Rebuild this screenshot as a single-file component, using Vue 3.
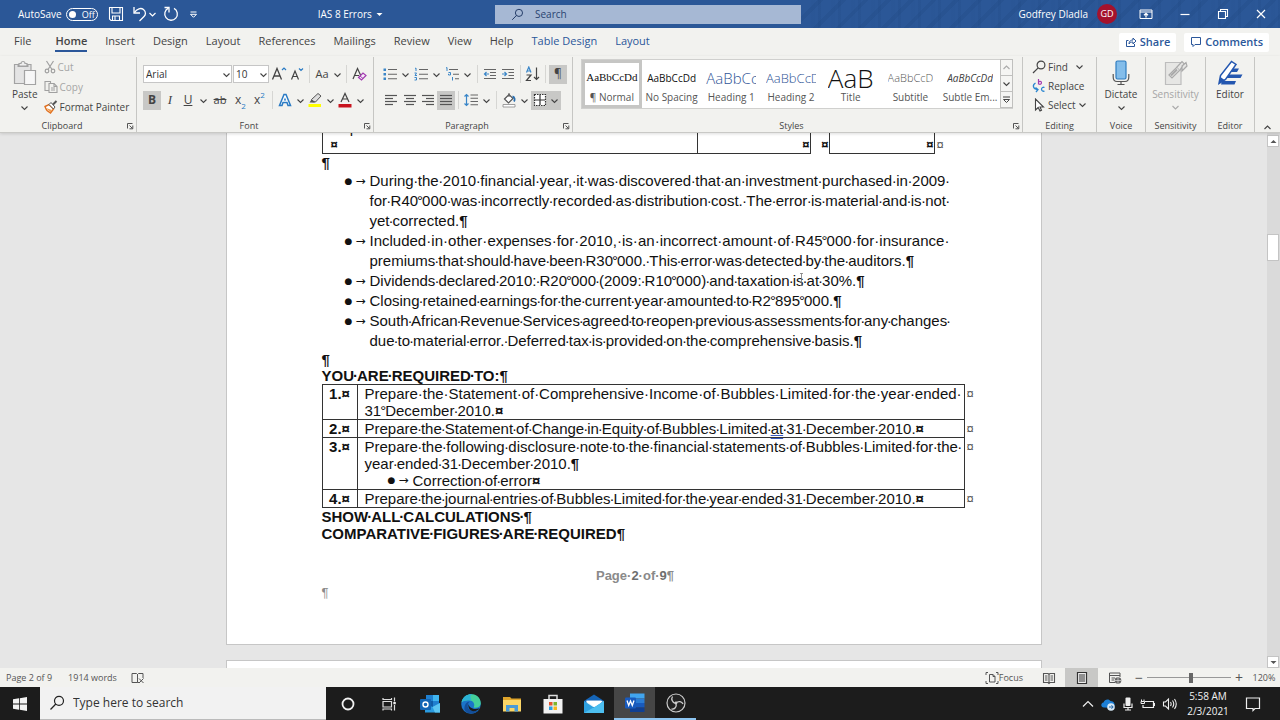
<script setup>
import { h, ref } from 'vue'

const chev = '<path d="M1.5 3.5 4.5 6.5 7.5 3.5" fill="none" stroke="#444" stroke-width="1.1"/>'
const lines4 = (a) => a.map(([x1, x2], i) => `<path d="M${x1} ${2.5 + i * 3}H${x2}" stroke="#555" stroke-width="1.2"/>`).join('')

const icons = {
  chev: [9, 9, chev],
  save: [16, 16, '<g fill="none" stroke="#fff" stroke-width="1.1"><path d="M1.5 1.5H14.5V14.5H3L1.5 13Z"/><path d="M4 1.5V7H12V1.5M4.5 14.5V10H11.5V14.5M7 10.5V14"/></g>'],
  undo: [16, 16, '<g fill="none" stroke="#fff" stroke-width="1.3"><path d="M2 1V7H8"/><path d="M2.3 6.7C5 2.5 9 1.5 11.5 3.5 14.5 6 13.5 9 12 10.5L7.5 15"/></g>'],
  chevW: [9, 9, '<path d="M1.5 3 4.5 6 7.5 3" fill="none" stroke="#fff" stroke-width="1.2"/>'],
  redo: [16, 16, '<g fill="none" stroke="#fff" stroke-width="1.3"><path d="M5.5 2.2A6.3 6.3 0 1 0 11 2.4"/><path d="M1.5 1.5H6V6.5"/></g>'],
  custom: [9, 9, '<path d="M1.5 2H7.5" stroke="#fff"/><path d="M1.5 4.3 4.5 7.3 7.5 4.3Z" fill="none" stroke="#fff"/>'],
  caretW: [9, 9, '<path d="M1.5 3H7.5L4.5 6Z" fill="#fff"/>'],
  search: [16, 16, '<g fill="none" stroke="#1f3864" stroke-width="1.2"><circle cx="9.8" cy="6" r="4.4"/><path d="M6.7 9.2 1.5 14.5"/></g>'],
  mode: [14, 14, '<g fill="none" stroke="#fff"><path d="M1 3H13V11.5H1ZM1 5H13"/><path d="M7 10.5V6.5M5 8.3 7 6.3 9 8.3" stroke-width="1.3"/></g>'],
  min: [12, 12, '<path d="M1.5 6.5H10.5" stroke="#fff" stroke-width="1.2"/>'],
  restore: [12, 12, '<g fill="none" stroke="#fff" stroke-width="1.1"><path d="M1.5 3.5H8.5V10.5H1.5Z"/><path d="M3.5 3.5V1.5H10.5V8.5H8.5"/></g>'],
  close: [12, 12, '<path d="M2 2 10 10M10 2 2 10" stroke="#fff" stroke-width="1.2"/>'],
  share: [12, 12, '<g fill="none" stroke="#2b579a"><path d="M3.5 4.5H1.5V10.5H9.5V8"/><path d="M4 8C4 5 6 4 8 4V2L11 5 8 8V6C6 6 5 6.5 4 8Z"/></g>'],
  comment: [12, 12, '<path d="M1.5 1.5H10.5V8.5H5L3 10.5V8.5H1.5Z" fill="none" stroke="#2b579a"/>'],
  paste: [24, 26, '<g fill="#efefef" stroke="#a3a3a3" stroke-width="1.2"><path d="M1.5 4.5H18V23.5H1.5Z" fill="#e4e4e4"/><path d="M4.5 6H15.5" stroke-width="2"/><path d="M6 6V3.5H8A2 2 0 0 1 12 3.5H14V6Z"/><path d="M11.5 10.5H22.5V24.5H11.5Z" fill="#f7f7f7"/></g>'],
  cut: [12, 14, '<g fill="none" stroke="#a0a0a0" stroke-width="1.2"><path d="M2.5 1 8 9.5M9.5 1 4 9.5"/><circle cx="3" cy="11" r="1.8"/><circle cx="9" cy="11" r="1.8"/></g>'],
  copy: [14, 14, '<g fill="#f1f1ee" stroke="#a0a0a0" stroke-width="1.1"><path d="M1 1.5H6.5V10.5H1Z"/><path d="M5 3.5H10L13 6.5V12.5H5Z"/><path d="M10 3.5V6.5H13M7 8H11M7 10H11" fill="none"/></g>'],
  painter: [14, 14, '<path d="M1 6.5 5 4.5 9.5 9 6.5 13 3 10.5 2 9Z" fill="#fff" stroke="#e07020" stroke-width="1.4"/><path d="M2 8 6.5 12.5 8 10Z" fill="#f19d4f"/><path d="M5 4.5 7 2.5 11 7 9.5 9Z" fill="#fff" stroke="#555"/><path d="M9 4.5 12.5 1" stroke="#555" stroke-width="2"/>'],
  launch: [8, 8, '<path d="M1.5 6.5V1.5H6.5M3.5 3.5 6.5 6.5M6.8 3.5V6.8H3.5" fill="none" stroke="#555"/>'],
  eraser: [16, 16, '<path d="M2 13 6.5 2.5 9.5 9M3.7 9.5H8" fill="none" stroke="#444" stroke-width="1.2"/><path d="M7.5 11.5 12 7 15 9.5 10.5 14Z" fill="#f6ecf8" stroke="#a33bb0" stroke-width="1.2"/><path d="M9 10 12 12.5" stroke="#a33bb0"/>'],
  growA: [18, 18, '<path d="M2.5 14.500 7 3.500 11.500 14.500M4 11H10" fill="none" stroke="#444" stroke-width="1.3"/><path d="M12 5 14 3 16 5" fill="none" stroke="#2a7bc4" stroke-width="1.2"/>'],
  shrinkA: [18, 18, '<path d="M3.500 14.500 7 6 10.500 14.500M4.800 11.500H9.200" fill="none" stroke="#444" stroke-width="1.2"/><path d="M11 3.500 13 5.500 15 3.500" fill="none" stroke="#2a7bc4" stroke-width="1.2"/>'],
  fx: [14, 14, '<path d="M1.5 12.5 6 1.5H8L12.5 12.5H10L9 9.5H5L4 12.5Z" fill="#fff" stroke="#2a7bc4" stroke-width="1.5"/><path d="M5.8 7.5H8.2L7 4.5Z" fill="#2a7bc4"/>'],
  hl: [16, 16, '<path d="M4.5 7.5 11 1.5 14 4 8.5 10H5.5Z" fill="#ddd" stroke="#555"/><path d="M4.5 7.5 8.5 10 5 10.5 2.5 10.5Z" fill="#555"/><path d="M1.5 12H14V15H1.5Z" fill="#ff0"/>'],
  fc: [14, 16, '<path d="M3 10 7 1.5 11 10M4.4 7H9.6" fill="none" stroke="#444" stroke-width="1.2"/><path d="M.5 12H13.5V15.5H.5Z" fill="#c8141e"/>'],
  bul: [14, 14, '<path d="M.5 1.5h2.5v2.5H.5zM.5 6h2.5v2.5H.5zM.5 10.5h2.5v2.5H.5z" fill="#3a86c8"/><path d="M5 2.5H14M5 7.2H14M5 11.8H14" stroke="#666" stroke-width="1.1"/>'],
  num: [14, 14, '<path d="M1 1.5 2 1V4M.5 6H2.5L1 8.5H3M.5 10.5H2.5V13H.5" fill="none" stroke="#3a86c8"/><path d="M5 2.5H14M5 7.2H14M5 11.8H14" stroke="#666" stroke-width="1.1"/>'],
  multi: [14, 14, '<path d="M1 1 2 .5V4M3.5 5.5H5.5V8H3.5V6.8M7.5 10V13.5" fill="none" stroke="#3a86c8"/><path d="M4 2.5H13M8 7.2H14M10 11.8H14" stroke="#666" stroke-width="1.1"/>'],
  out: [14, 14, '<path d="M1 2.5H13M7 5.5H13M7 8.5H13M1 11.5H13" stroke="#666" stroke-width="1.1"/><path d="M6 7H1.5M3.5 5 1.5 7 3.5 9" fill="none" stroke="#3a86c8" stroke-width="1.2"/>'],
  ind: [14, 14, '<path d="M1 2.5H13M7.5 5.5H13M7.5 8.5H13M1 11.5H13" stroke="#666" stroke-width="1.1"/><path d="M1 7H5.5M3.5 5 5.5 7 3.5 9" fill="none" stroke="#3a86c8" stroke-width="1.2"/>'],
  sort: [16, 16, '<path d="M1.5 6.5 3.8 1 6 6.5M2.2 5H5.3" fill="none" stroke="#3a86c8" stroke-width="1.2"/><path d="M1.5 9H6L1.5 14.5H6" fill="none" stroke="#444" stroke-width="1.2"/><path d="M11.5 1.5V13.5M9 11 11.5 13.5 14 11" fill="none" stroke="#444" stroke-width="1.2"/>'],
  al: [14, 14, lines4([[1, 13], [1, 9], [1, 13], [1, 9]])],
  ac: [14, 14, lines4([[1, 13], [3, 11], [1, 13], [3, 11]])],
  ar: [14, 14, lines4([[1, 13], [5, 13], [1, 13], [5, 13]])],
  aj: [14, 14, lines4([[1, 13], [1, 13], [1, 13], [1, 13]])],
  ls: [14, 14, '<path d="M6.5 2H14M6.5 5.2H14M6.5 8.5H14M6.5 11.8H14" stroke="#666" stroke-width="1.1"/><path d="M2.5 1.5V12.5M.5 3.5 2.5 1.5 4.5 3.5M.5 10.5 2.5 12.5 4.5 10.5" fill="none" stroke="#3a86c8" stroke-width="1.2"/>'],
  bucket: [14, 16, '<path d="M2.5 7 7 2.5 11 6.5 6.5 11Z" fill="#fff" stroke="#555" stroke-width="1.2"/><path d="M7 5V1" stroke="#555"/><path d="M10.5 4.5C13 5 13 8 12 9.5" fill="none" stroke="#2a6fb0" stroke-width="1.8"/><path d="M1 12.5H13V15H1Z" fill="#fff" stroke="#888" stroke-width=".8"/>'],
  border: [14, 14, '<path d="M1.5 1.5H12.5V12.5H1.5Z" fill="#fff" stroke="#333" stroke-width="1.2" stroke-dasharray="1.5 1"/><path d="M7 2V12M2 7H12" stroke="#333" stroke-width="1.2"/>'],
  find: [14, 14, '<g fill="none" stroke="#444" stroke-width="1.2"><circle cx="9" cy="5" r="3.9"/><path d="M6.2 7.8 1 13"/></g>'],
  replace: [14, 14, '<path d="M6.5 0V5.5M6.5 3.5A1.5 1.5 0 1 1 6.5 4.2" fill="none" stroke="#a33bb0" stroke-width="1.2"/><path d="M12.5 8.5A2 2 0 1 0 12.5 12" fill="none" stroke="#2a86d0" stroke-width="1.3"/><path d="M3.5 4C0 6 1 10 5.5 10.5M3.5 8.5 6 10.5 4 13" fill="none" stroke="#2a86d0" stroke-width="1.3"/>'],
  select: [14, 14, '<path d="M3.5 1V12L6.2 9.5 8 13 9.5 12.2 8 9H11.5Z" fill="#fff" stroke="#444" stroke-width="1.1"/>'],
  mic: [18, 26, '<rect x="4" y="1" width="10" height="18" rx="1.5" fill="#83bdea" stroke="#2f7dc0" stroke-width="1.2"/><path d="M1.2 14V17C1.2 20 3 21.5 5 21.5H13C15 21.5 16.8 20 16.8 17V14M9 21.5V24.5M5.5 24.5H12.5" fill="none" stroke="#555" stroke-width="1.2"/>'],
  sens: [24, 26, '<path d="M1.5 2.5H17V24.5H1.5Z" fill="#e6e6e4" stroke="#bdbdbd" stroke-width="1.2"/><g fill="#e6e6e4" stroke="#a9a9a9" stroke-width="1.2"><path d="M5 15 13 7 16 10 8 18Z"/><path d="M13 7 18 1.5 20 3.5 16 10M18 6 22 2.5 23 6 18 11Z"/><path d="M7 15.5 13 9.5" stroke-width="2"/></g>'],
  editor: [26, 26, '<path d="M15 8.5H22L20 12H12ZM10.5 14.5H25.5L23.5 18H8ZM5 21H19L17.5 24.5H4Z" fill="#2457b0"/><path d="M2 23.5 3.5 15.5 14.5 1.5 19 4.5 8.5 19.5Z" fill="#fff" stroke="#2457b0" stroke-width="1.5"/><path d="M2 23.5 3.5 17 7.5 20Z" fill="#2457b0"/>'],
  up: [9, 9, '<path d="M1.5 6 4.5 3 7.5 6" fill="none" stroke="#444" stroke-width="1.1"/>'],
  upOff: [9, 9, '<path d="M1.5 6 4.5 3 7.5 6" fill="none" stroke="#aaa" stroke-width="1.1"/>'],
  more: [9, 9, '<path d="M1 2H8" stroke="#444"/><path d="M1.5 4.5 4.5 7.5 7.5 4.5Z" fill="none" stroke="#444"/>'],
  triUp: [9, 9, '<path d="M1.5 6H7.5L4.5 3Z" fill="#555"/>'],
  triDown: [9, 9, '<path d="M1.5 3H7.5L4.5 6Z" fill="#555"/>'],
  proof: [14, 12, '<path d="M6.5 2V10.5H1V1.5H5.5L6.5 2.5 7.5 1.5H12V6" fill="none" stroke="#555"/><path d="M8 6.5 12.5 11M12.5 6.5 8 11M6.5 10.5H8" fill="none" stroke="#555"/>'],
  focus: [14, 14, '<path d="M1 4V1.5H3M11 1.5H13V4M13 10V12.5H11M3 12.5H1V10" fill="none" stroke="#555"/><path d="M4.5 3.5H8L10 5.5V11H4.5ZM8 3.5V5.5H10" fill="none" stroke="#555"/>'],
  read: [14, 14, '<path d="M7 3V12M1.5 2.5H6L7 3.5 8 2.5H12.5V11.5H8L7 12.5 6 11.5H1.5Z" fill="none" stroke="#555" stroke-width="1.1"/><path d="M3 5H5.5M3 7H5.5M3 9H5.5M8.5 5H11M8.5 7H11M8.5 9H11" stroke="#555"/>'],
  print: [12, 14, '<path d="M1.5 1.5H10.5V12.5H1.5Z" fill="#eee" stroke="#333" stroke-width="1.2"/><path d="M3 4H9M3 6H9M3 8H9M3 10H9" stroke="#333"/>'],
  web: [14, 14, '<path d="M7 11.5H1.5V2H12V6M1.5 4.5H12M3.5 7H7M3.5 9H6" fill="none" stroke="#555"/><circle cx="10" cy="9.5" r="3.3" fill="#666"/><path d="M7 9.5H13M10 6.5V12.5" stroke="#ddd" stroke-width=".7"/>'],
  win: [16, 16, '<path d="M1 3.2 7 2.3V7.6H1ZM7.8 2.2 15 1V7.6H7.8ZM1 8.4H7V13.7L1 12.8ZM7.8 8.4H15V15L7.8 13.8Z" fill="#f2f2f2"/>'],
  tsearch: [16, 16, '<g fill="none" stroke="#222" stroke-width="1.2"><circle cx="10" cy="5.8" r="4.5"/><path d="M6.8 9 1.5 14.5"/></g>'],
  cortana: [16, 16, '<circle cx="8" cy="8" r="5.5" fill="none" stroke="#f2f2f2" stroke-width="1.8"/>'],
  tview: [16, 16, '<g fill="none" stroke="#ddd" stroke-width="1.2"><path d="M2 5.5H10.5V11H2ZM2 2V3.5H10.5V2M2 14.5V13H10.5V14.5M13.5 1.5V5.5M13.5 9V14.5"/></g><path d="M12.3 6H14.8V8.3H12.3Z" fill="#eee"/>'],
  outlook: [22, 22, '<path d="M7 2H20V15H7Z" fill="#1f7fcf"/><path d="M14 2H20V8H14Z" fill="#40b4ee"/><path d="M7 8H14V14H7Z" fill="#0f5ca8"/><path d="M6 10 13.5 14 21 10V19.5H6Z" fill="#2a9be0"/><path d="M13.5 14 21 10V19.5H16Z" fill="#5cc5f2"/><rect x="1" y="6" width="11" height="11" rx="1" fill="#1265b5"/><circle cx="6.5" cy="11.5" r="2.5" fill="none" stroke="#fff" stroke-width="1.4"/>'],
  edge: [22, 22, '<circle cx="11" cy="11" r="9.8" fill="#1b74c9"/><path d="M1.5 9.5C3 3 8 1 12 1.3 18 1.8 21 6.5 20.8 10.5 20.5 14 17 15.5 13.5 14.5 15 12.5 14.5 8.5 10.5 7.5 7 6.7 3.5 7.5 1.5 9.5Z" fill="#43cf9b"/><path d="M1.5 9.5C3 3 8 1 12 1.3 8 3.5 13 7 10.5 7.5 7 6.7 3.5 7.5 1.5 9.5Z" fill="#2bb3d6"/><path d="M8 11C6.5 15 10 19.5 18 17.8 14 21.8 7 21.5 4.5 17 4 12 6 9 10 8.5 9 9 8.5 10 8 11Z" fill="#134e9a"/><path d="M8.5 11C9 14.5 13.5 17.5 19.5 15.2 18.5 17.5 14 19.2 11 17.5 8.5 16 8 13 8.5 11Z" fill="#1c1c1c"/>'],
  folder: [22, 20, '<path d="M2 3H9L10.5 4.5H20V17H2Z" fill="#e0a52b"/><path d="M2 6H20V17.5H2Z" fill="#fbd667"/><path d="M5 11H17V17.5H13.5V14H8.5V17.5H5Z" fill="#4a9bd8"/>'],
  store: [22, 22, '<path d="M7 7V2.5H15V7" fill="none" stroke="#ddd" stroke-width="1.5"/><path d="M1.5 6H20.5V20.5H1.5Z" fill="#f2f2f2"/><path d="M7 9H10.5V12.5H7Z" fill="#e5532d"/><path d="M11.5 9H15V12.5H11.5Z" fill="#7db52c"/><path d="M7 13.5H10.5V17H7Z" fill="#2a9fe0"/><path d="M11.5 13.5H15V17H11.5Z" fill="#f7b81c"/>'],
  mail: [22, 22, '<path d="M1 8 11 1.5 21 8V12H1Z" fill="#1565b8"/><path d="M3.5 7.5H18.5V14H3.5Z" fill="#e8f4fb"/><path d="M1 8V20H21V8L11 14.5Z" fill="#2ea0e0"/><path d="M1 20 14 12.5 21 8V20Z" fill="#4dbff0"/><path d="M3 8H20L11.5 13.8Z" fill="#fff"/>'],
  word: [22, 22, '<path d="M6 1.5H20.5V6.5H6Z" fill="#41a5ee"/><path d="M6 6.5H20.5V11H6Z" fill="#2b7cd3"/><path d="M6 11H20.5V15.5H6Z" fill="#185abd"/><path d="M6 15.5H20.5V20H6Z" fill="#103f91"/><rect x="1" y="5.5" width="11" height="11" rx="1" fill="#185abd"/><path d="M3 8.5 4.7 13.5 6.5 9 8.3 13.5 10 8.5" fill="none" stroke="#fff" stroke-width="1.3"/>'],
  obs: [22, 22, '<circle cx="11" cy="11" r="9" fill="#222" stroke="#ccc" stroke-width="1.2"/><g fill="none" stroke="#ccc" stroke-width="1.3"><path d="M10.5 11.5C7 10.5 6 7 7.5 4.5"/><path d="M11 11C13.5 8.5 17 9.5 18 12"/><path d="M11 11.5C12 15 9.5 17.5 6.5 17"/></g><circle cx="11" cy="11" r="1.4" fill="#ccc"/>'],
  tup: [12, 12, '<path d="M1 8.5 6 3.5 11 8.5" fill="none" stroke="#eee" stroke-width="1.2"/>'],
  cloud: [16, 16, '<path d="M4 11.5C.5 11.5.5 7 3.5 6.5 4.5 3 9 2.5 10.5 5 14 5 15 8 14.5 9.5L13 12Z" fill="#1c7fd6"/><circle cx="11" cy="11" r="3.8" fill="#d7e9f7"/><path d="M9 11H13M11.5 9.2 13.2 11 11.5 12.8" fill="none" stroke="#1d62a5"/>'],
  tmic: [12, 16, '<rect x="3.5" y="1.5" width="5" height="8.5" rx="1" fill="#eee"/><path d="M2 7.5V11.5H10V7.5M6 11.5V14M3 14H9" fill="none" stroke="#eee" stroke-width="1.2"/>'],
  batt: [16, 12, '<path d="M5 3.5H13.5V9.5H3V7" fill="none" stroke="#eee" stroke-width="1.2"/><path d="M14.5 5V8" stroke="#eee"/><path d="M1.5 1.5V3.5M4 1.5V3.5M1 3.5H4.5V5.5H1Z" stroke="#eee" fill="none"/>'],
  vol: [16, 14, '<g fill="none" stroke="#eee" stroke-width="1.1"><path d="M1.5 5H3.5L6.5 2V12L3.5 9H1.5Z"/><path d="M8.5 5Q9.8 7 8.5 9M10.5 3.5Q13 7 10.5 10.5M12.5 2Q16 7 12.5 12"/></g>'],
  note: [16, 16, '<path d="M1.5 2H14.5V12.5H10L8 14.5V12.5H1.5Z" fill="none" stroke="#eee" stroke-width="1.2"/>'],
  ibeam: [5, 13, '<path d="M1 .5H4M2.5 .5V12.5M1 12.5H4" stroke="#777" stroke-width=".8" fill="none"/>'],
}

const Ico = (p) => {
  const [w, ht, body] = icons[p.n]
  return h('svg', { width: w, height: ht, viewBox: `0 0 ${w} ${ht}`, 'aria-hidden': 'true', innerHTML: body })
}
Ico.props = ['n']

/* One typeset line with formatting marks: · for a space, ° for a fixed space. */
const Line = (p) =>
  h('span', { class: ['ln', p.j && 'ln-j'] },
    p.t.split(/([·°¶¤]|\[at\])/).filter(Boolean).map((s) => {
      if (s === '·') return h('span', { class: 'sp' }, s)
      if (s === '°') return h('span', { class: 'nb' }, s)
      if (s === '¶' || s === '¤') return h('b', s)
      if (s === '[at]') return h('span', { class: 'gram' }, 'at')
      return h('span', s)
    }))
Line.props = ['t', 'j']

const tabs = ['File', 'Home', 'Insert', 'Design', 'Layout', 'References', 'Mailings', 'Review', 'View', 'Help', 'Table Design', 'Layout']
const styles = [
  ['AaBbCcDd', '¶ Normal', 's-normal'],
  ['AaBbCcDd', 'No Spacing', 's-nosp'],
  ['AaBbCc', 'Heading 1', 's-h1'],
  ['AaBbCcD', 'Heading 2', 's-h2'],
  ['AaB', 'Title', 's-title'],
  ['AaBbCcD', 'Subtitle', 's-sub'],
  ['AaBbCcDd', 'Subtle Em...', 's-em'],
]
const bullets = [
  [['During·the·2010·financial·year,·it·was·discovered·that·an·investment·purchased·in·2009·', 1],
   ['for·R40°000·was·incorrectly·recorded·as·distribution·cost.·The·error·is·material·and·is·not·', 1],
   ['yet·corrected.¶', 0]],
  [['Included·in·other·expenses·for·2010,·is·an·incorrect·amount·of·R45°000·for·insurance·', 1],
   ['premiums·that·should·have·been·R30°000.·This·error·was·detected·by·the·auditors.¶', 0]],
  [['Dividends·declared·2010:·R20°000·(2009:·R10°000)·and·taxation·is·at·30%.¶', 0]],
  [['Closing·retained·earnings·for·the·current·year·amounted·to·R2°895°000.¶', 0]],
  [['South·African·Revenue·Services·agreed·to·reopen·previous·assessments·for·any·changes·', 1],
   ['due·to·material·error.·Deferred·tax·is·provided·on·the·comprehensive·basis.¶', 0]],
]
const tasks = [
  { n: '1.¤', l: [['Prepare·the·Statement·of·Comprehensive·Income·of·Bubbles·Limited·for·the·year·ended·', 1], ['31°December·2010.¤', 0]] },
  { n: '2.¤', l: [['Prepare·the·Statement·of·Change·in·Equity·of·Bubbles·Limited·[at]·31·December·2010.¤', 0]] },
  { n: '3.¤', l: [['Prepare·the·following·disclosure·note·to·the·financial·statements·of·Bubbles·Limited·for·the·', 1], ['year·ended·31·December·2010.¶', 0]], sub: 'Correction·of·error¤' },
  { n: '4.¤', l: [['Prepare·the·journal·entries·of·Bubbles·Limited·for·the·year·ended·31·December·2010.¤', 0]] },
]
const apps = ['cortana', 'tview', 'outlook', 'edge', 'folder', 'store', 'mail', 'word', 'obs']
const font = ref('Arial')
const size = ref('10')
const zoom = ref(52)
</script>

<template>
  <div class="app">
    <header class="title">
      <div class="left">
        <span>AutoSave</span>
        <button class="toggle" aria-label="AutoSave off"><i></i>Off</button>
        <button aria-label="Save"><Ico n="save" /></button>
        <button class="undo" aria-label="Undo"><Ico n="undo" /><Ico n="chevW" /></button>
        <button aria-label="Redo"><Ico n="redo" /></button>
        <button class="cust" aria-label="Customize"><Ico n="custom" /></button>
        <button class="docname">IAS 8 Errors <Ico n="caretW" /></button>
      </div>
      <label class="search"><Ico n="search" /><input type="text" placeholder="Search" aria-label="Search" /></label>
      <div class="right">
        <span>Godfrey Dladla</span>
        <span class="avatar">GD</span>
        <button aria-label="Ribbon display"><Ico n="mode" /></button>
        <button aria-label="Minimize"><Ico n="min" /></button>
        <button aria-label="Restore"><Ico n="restore" /></button>
        <button aria-label="Close"><Ico n="close" /></button>
      </div>
    </header>

    <nav class="tabs">
      <button v-for="(t, i) in tabs" :key="i" :class="['tab', { on: i === 1, ctx: i > 9 }]">{{ t }}</button>
      <span class="grow"></span>
      <button class="pill"><Ico n="share" />Share</button>
      <button class="pill"><Ico n="comment" />Comments</button>
    </nav>

    <section class="ribbon">
      <div class="grp clip">
        <div class="body">
          <button class="big off"><Ico n="paste" /><span class="dark">Paste</span><Ico n="chev" /></button>
          <div class="stack">
            <button class="off"><Ico n="cut" />Cut</button>
            <button class="off"><Ico n="copy" />Copy</button>
            <button><Ico n="painter" />Format Painter</button>
          </div>
        </div>
        <div class="cap"><span>Clipboard</span><button aria-label="Clipboard options"><Ico n="launch" /></button></div>
      </div>

      <div class="grp font">
        <div class="rows">
          <div class="row">
            <span class="combo wide"><select v-model="font" aria-label="Font"><option>Arial</option></select><Ico n="chev" /></span>
            <span class="combo"><select v-model="size" aria-label="Font size"><option>10</option></select><Ico n="chev" /></span>
            <button class="t" aria-label="Grow font"><Ico n="growA" /></button>
            <button class="t" aria-label="Shrink font"><Ico n="shrinkA" /></button>
            <i class="sep"></i>
            <button class="t aa">Aa</button><button class="c" aria-label="Change case"><Ico n="chev" /></button>
            <i class="sep"></i>
            <button class="t" aria-label="Clear formatting"><Ico n="eraser" /></button>
          </div>
          <div class="row">
            <button class="t sel"><b>B</b></button>
            <button class="t ital">I</button>
            <button class="t und">U</button><button class="c" aria-label="Underline style"><Ico n="chev" /></button>
            <button class="t strike">ab</button>
            <button class="t xs">x<sub>2</sub></button>
            <button class="t xs">x<sup>2</sup></button>
            <i class="sep"></i>
            <button class="t" aria-label="Text effects"><Ico n="fx" /></button><button class="c" aria-label="Effects"><Ico n="chev" /></button>
            <button class="t" aria-label="Highlight"><Ico n="hl" /></button><button class="c" aria-label="Highlight colour"><Ico n="chev" /></button>
            <button class="t" aria-label="Font colour"><Ico n="fc" /></button><button class="c" aria-label="Colours"><Ico n="chev" /></button>
          </div>
        </div>
        <div class="cap"><span>Font</span><button aria-label="Font options"><Ico n="launch" /></button></div>
      </div>

      <div class="grp para">
        <div class="rows">
          <div class="row">
            <button class="t" aria-label="Bullets"><Ico n="bul" /></button><button class="c" aria-label="Bullet library"><Ico n="chev" /></button>
            <button class="t" aria-label="Numbering"><Ico n="num" /></button><button class="c" aria-label="Number library"><Ico n="chev" /></button>
            <button class="t" aria-label="Multilevel"><Ico n="multi" /></button><button class="c" aria-label="List library"><Ico n="chev" /></button>
            <i class="sep"></i>
            <button class="t" aria-label="Outdent"><Ico n="out" /></button>
            <button class="t" aria-label="Indent"><Ico n="ind" /></button>
            <i class="sep"></i>
            <button class="t" aria-label="Sort"><Ico n="sort" /></button>
            <i class="sep"></i>
            <button class="t sel">¶</button>
          </div>
          <div class="row">
            <button class="t align" aria-label="Align left"><Ico n="al" /></button>
            <button class="t align" aria-label="Center"><Ico n="ac" /></button>
            <button class="t" aria-label="Align right"><Ico n="ar" /></button>
            <button class="t sel" aria-label="Justify"><Ico n="aj" /></button>
            <i class="sep"></i>
            <button class="t" aria-label="Line spacing"><Ico n="ls" /></button><button class="c" aria-label="Spacing"><Ico n="chev" /></button>
            <i class="sep"></i>
            <button class="t" aria-label="Shading"><Ico n="bucket" /></button><button class="c" aria-label="Shading colour"><Ico n="chev" /></button>
            <button class="t sel pair" aria-label="Borders"><Ico n="border" /><Ico n="chev" /></button>
          </div>
        </div>
        <div class="cap"><span>Paragraph</span><button aria-label="Paragraph options"><Ico n="launch" /></button></div>
      </div>

      <div class="grp sty">
        <div class="gallery">
          <button v-for="(s, i) in styles" :key="i" :class="['style', { cur: i === 0 }]">
            <span :class="['sample', s[2]]">{{ s[0] }}</span><span class="sname">{{ s[1] }}</span>
          </button>
          <div class="gscroll">
            <button aria-label="Previous styles"><Ico n="upOff" /></button>
            <button aria-label="Next styles"><Ico n="chev" /></button>
            <button aria-label="More styles"><Ico n="more" /></button>
          </div>
        </div>
        <div class="cap"><span>Styles</span><button aria-label="Style options"><Ico n="launch" /></button></div>
      </div>

      <div class="grp edit">
        <div class="stack">
          <button><Ico n="find" />Find<Ico n="chev" class="gapl" /></button>
          <button><Ico n="replace" />Replace</button>
          <button><Ico n="select" />Select<Ico n="chev" /></button>
        </div>
        <div class="cap"><span>Editing</span></div>
      </div>
      <div class="grp voice">
        <button class="big"><Ico n="mic" /><span>Dictate</span><Ico n="chev" /></button>
        <div class="cap"><span>Voice</span></div>
      </div>
      <div class="grp sensi">
        <button class="big off"><Ico n="sens" /><span>Sensitivity</span><Ico n="upOff" class="flip" /></button>
        <div class="cap"><span>Sensitivity</span></div>
      </div>
      <div class="grp voice">
        <button class="big"><Ico n="editor" /><span>Editor</span></button>
        <div class="cap"><span>Editor</span></div>
      </div>
      <div class="collapse"><button aria-label="Collapse ribbon"><Ico n="up" /></button></div>
    </section>

    <main class="work">
      <div class="canvas">
        <article class="page">
          <table class="figures">
            <colgroup><col class="f1" /><col class="f2" /><col class="f3" /><col class="f4" /><col class="f5" /></colgroup>
            <tbody>
              <tr><td class="bx">Depreciation</td><td class="bx num">400·000</td><td></td><td class="bx num">200·000</td><td></td></tr>
              <tr class="last"><td class="bx">¤</td><td class="bx end">¤</td><td class="end">¤</td><td class="bx end">¤</td><td class="mark">¤</td></tr>
            </tbody>
          </table>
          <p class="blank">¶</p>
          <ul class="bullets">
            <li v-for="(b, i) in bullets" :key="i">
              <span class="dot">●</span><span class="arr">→</span>
              <div class="txt"><Line v-for="(l, k) in b" :key="k" :t="l[0]" :j="l[1]" /></div>
              <Ico v-if="i === 2" n="ibeam" class="ibeam" />
            </li>
          </ul>
          <p class="blank short">¶</p>
          <h2><Line t="YOU·ARE·REQUIRED·TO:¶" /></h2>
          <table class="tasks">
            <colgroup><col class="c1" /><col class="c2" /><col class="c3" /></colgroup>
            <tbody>
              <tr v-for="t in tasks" :key="t.n">
                <th scope="row">{{ t.n }}</th>
                <td>
                  <Line v-for="(l, k) in t.l" :key="k" :t="l[0]" :j="l[1]" />
                  <div v-if="t.sub" class="subitem"><span class="dot">●</span><span class="arr">→</span><Line :t="t.sub" /></div>
                </td>
                <td class="mark">¤</td>
              </tr>
            </tbody>
          </table>
          <h2><Line t="SHOW·ALL·CALCULATIONS·¶" /></h2>
          <h2><Line t="COMPARATIVE·FIGURES·ARE·REQUIRED¶" /></h2>
          <p class="foot">Page·<b>2</b>·of·<b>9</b>¶</p>
          <p class="footmark">¶</p>
        </article>
        <article class="page next"></article>
      </div>
      <div class="vbar">
        <button aria-label="Scroll up"><Ico n="triUp" /></button>
        <div class="track"><div class="thumb"></div></div>
        <button aria-label="Scroll down"><Ico n="triDown" /></button>
      </div>
    </main>

    <footer class="status">
      <span>Page 2 of 9</span><span class="words">1914 words</span><Ico n="proof" />
      <span class="grow"></span>
      <button class="focus"><Ico n="focus" />Focus</button>
      <button class="view" aria-label="Read mode"><Ico n="read" /></button>
      <button class="view cur" aria-label="Print layout"><Ico n="print" /></button>
      <button class="view" aria-label="Web layout"><Ico n="web" /></button>
      <button class="pm" aria-label="Zoom out">−</button>
      <input v-model="zoom" type="range" aria-label="Zoom" />
      <button class="pm" aria-label="Zoom in">+</button>
      <span class="pct">120%</span>
    </footer>

    <div class="taskbar">
      <button class="start" aria-label="Start"><Ico n="win" /></button>
      <label class="tsearch"><Ico n="tsearch" /><input type="text" placeholder="Type here to search" aria-label="Type here to search" /></label>
      <div class="tasklist">
        <button v-for="a in apps" :key="a" :class="['task', a]" :aria-label="a"><Ico :n="a" /></button>
      </div>
      <span class="grow"></span>
      <div class="tray">
        <Ico n="tup" /><Ico n="cloud" /><Ico n="tmic" /><Ico n="batt" /><Ico n="vol" />
      </div>
      <div class="clock"><span>5:58 AM</span><span>2/3/2021</span></div>
      <button class="note" aria-label="Notifications"><Ico n="note" /></button>
    </div>
  </div>
</template>

<style>
html, body { margin: 0; background: #e6e6e6; }
.ln { display: block; white-space: nowrap; }
.ln .sp, .ln .nb { margin: 0 -1px; }
.ln-j { display: flex; }
.ln-j > * { flex: none; }
.ln-j > .sp { display: flex; justify-content: center; flex: 1 1 0; min-width: 0; margin: 0; }
.ln .gram { text-decoration-line: underline; text-decoration-style: double; text-decoration-color: #3b5bc4; text-underline-offset: 1px; }
.ln b { font-weight: 700; }
</style>

<style scoped>
.app { height: 100vh; display: flex; flex-direction: column; overflow: hidden; font: 11px/14px "Open Sans", "Noto Sans", sans-serif; color: #444; }
button { font: inherit; color: inherit; background: none; border: 0; padding: 0; margin: 0; display: flex; align-items: center; justify-content: center; white-space: nowrap; }
svg { display: block; flex: none; }
p, h2, ul { margin: 0; padding: 0; }
.grow { flex: 1; }

.title { flex: none; height: 28px; display: grid; grid-template-columns: 495fr 306fr 479fr; align-items: center; color: #fff; background: #2b5797; }
.left { display: flex; align-items: center; padding-left: 18px; font-size: 10px; }
.toggle { width: 32px; height: 13px; box-sizing: border-box; border: 1px solid #fff; border-radius: 7px; margin: 0 10px 0 4px; gap: 6px; font-size: 9px; line-height: 11px; }
.toggle i { width: 7px; height: 7px; border-radius: 50%; background: #fff; }
.undo { margin: 0 6px 0 8px; }
.cust { margin-left: 10px; }
.docname { margin-left: 120px; gap: 3px; }
.search { height: 19px; display: flex; align-items: center; gap: 11px; padding-left: 16px; background: #a6b8d4; }
.search svg { width: 13px; height: 13px; }
.search input { flex: 1; min-width: 0; border: 0; padding: 0; background: none; font: 10px/14px "Open Sans", sans-serif; color: #1f3864; }
.search input::placeholder { color: #2a4371; opacity: 1; }
.right { display: flex; align-items: center; justify-content: flex-end; height: 28px; gap: 26px; padding-right: 13px; font-size: 10px; background: repeating-linear-gradient(90deg, #0000 0 10px, #1f47800f 10px 14px, #0000 14px 17px, #1f478033 17px 20px), repeating-linear-gradient(135deg, #0000 0 12px, #1f478040 12px 16px); }
.right > span:first-child { margin-right: -17px; }
.right .avatar { width: 20px; height: 20px; border-radius: 50%; background: #a4122c; font-size: 9px; line-height: 20px; text-align: center; margin-right: -4px; }

.tabs { flex: none; height: 28px; display: flex; align-items: center; padding: 0 11px 0 14px; background: #f2f2ef; font-size: 11px; }
.tab { height: 20px; margin-right: 18px; border-bottom: 2px solid transparent; box-sizing: border-box; }
.tab:first-child { margin-right: 24px; }
.tab.on { font-weight: 600; border-color: #2b579a; }
.tab.ctx { color: #2b579a; }
.pill { height: 19px; margin-left: 8px; padding: 0 6px; gap: 3px; background: #fff; border-radius: 2px; color: #2b579a; font-weight: 600; }

.ribbon { flex: none; height: 77px; box-sizing: border-box; display: flex; background: #f2f2ef; border-bottom: 1px solid #c9c9c6; position: relative; z-index: 1; box-shadow: 0 1px 3px #0002; }
.grp { display: flex; flex-direction: column; justify-content: space-between; box-sizing: border-box; margin: 1px 0 0; border-right: 1px solid #c6c6c3; }
.clip { width: 137px; }
.font { width: 237px; }
.para { width: 199px; }
.sty { flex: 1; min-width: 0; }
.edit { width: 74px; }
.voice { width: 49px; }
.sensi { width: 60px; }
.cap { flex: none; display: flex; align-items: center; height: 13px; font-size: 9px; line-height: 13px; color: #444; }
.cap span { flex: 1; text-align: center; }
.cap button { width: 12px; }
.body { display: flex; gap: 6px; padding-left: 12px; }
.big { flex-direction: column; justify-content: flex-start; gap: 1px; padding-top: 3px; font-size: 10px; }
.big > svg:last-child { margin-top: 1px; }
.off { color: #a6a6a6; }
.dark { color: #444; }
.flip { transform: rotate(180deg); }
.stack { display: flex; flex-direction: column; align-items: flex-start; }
.stack button { height: 20px; gap: 2px; font-size: 10px; }
.stack svg { min-width: 9px; }
.edit .stack { padding-left: 9px; }
.edit .stack button { height: 19px; }
.gapl { margin-left: 5px; }
.rows { display: flex; flex-direction: column; gap: 8px; padding: 8px 0 0 6px; }
.row { display: flex; align-items: center; height: 18px; }
.para .row { padding-left: 1px; }
.t { width: 18px; height: 19px; font-size: 12px; }
.c { width: 12px; height: 18px; }
.para .c { margin-right: 1px; }
.align { width: 19px; }
.sel { background: #c8c8c6; }
.pair { width: 30px; gap: 3px; }
.sep { width: 1px; height: 18px; margin: 0 3px; background: #d6d6d3; }
.combo { position: relative; width: 36px; height: 18px; margin-right: 1px; }
.combo.wide { width: 89px; }
.combo select { width: 100%; height: 18px; appearance: none; border: 1px solid #c6c6c6; border-radius: 0; background: #fff; padding: 0 2px; font: 10px/14px "Open Sans", sans-serif; color: #333; }
.combo svg { position: absolute; right: 1px; top: 5px; }
.xs { width: 19px; }
.xs sup { font-size: 8px; line-height: 8px; align-self: flex-start; color: #2a7bc4; }
.xs sub { font-size: 8px; line-height: 8px; align-self: flex-end; color: #2a7bc4; }
.aa { font-size: 11px; }
.ital { font-family: "Liberation Serif", serif; font-style: italic; font-size: 13px; }
.und { text-decoration: underline; }
.strike { width: 22px; text-decoration: line-through; font-size: 11px; }

.gallery { flex: none; display: flex; height: 50px; margin: 2px 9px 0 8px; box-sizing: border-box; border: 1px solid #d0d0ce; background: #fff; }
.style { flex: 1 1 60px; min-width: 0; flex-direction: column; justify-content: flex-end; overflow: hidden; box-sizing: border-box; padding-bottom: 3px; }
.style.cur { border: 3px solid #c6c6c4; padding-bottom: 0; }
.sample { height: 24px; line-height: 24px; max-width: 50px; overflow: hidden; color: #111; font-size: 10px; }
.sname { font-size: 10px; line-height: 15px; color: #555; }
.s-normal { font: 11px/22px "Liberation Serif", serif; max-width: none; }
.s-h1 { font-size: 15px; font-weight: 300; color: #2f5496; }
.s-h2 { font-size: 13px; font-weight: 300; color: #2f5496; }
.s-title { font-size: 26px; font-weight: 300; }
.s-sub { font-size: 11px; font-weight: 300; color: #555; }
.s-em { font-style: italic; color: #404040; }
.gscroll { width: 12px; flex: none; display: flex; flex-direction: column; background: #f5f5f3; }
.gscroll button { flex: 1; border: 1px solid #c0c0be; margin: -1px -1px 0 0; }
.collapse { width: 25px; display: flex; align-items: flex-end; justify-content: center; }

.work { flex: 1; min-height: 0; display: flex; background: #e6e6e6; }
.canvas { flex: 1; min-width: 0; overflow: hidden; }
.page { width: 816px; min-height: 512px; box-sizing: border-box; margin: 0 auto 15px; padding: 0 92px 0 95px; background: #fff; border: solid #c6c6c6; border-width: 0 1px 1px; overflow: hidden; font: 15px/17px "Liberation Sans", Arial, sans-serif; color: #111; }
.page.next { border-top-width: 1px; }
table { border-collapse: collapse; table-layout: fixed; }
.figures { width: 627px; margin-top: -14px; }
.figures td { padding: 0 0 0 8px; height: 17px; }
.figures .bx { border: solid #333; border-width: 0 1px; }
.figures .last td { font-size: 13px; font-weight: 700; }
.figures .last .bx { border-bottom-width: 1px; }
.figures .num { text-align: right; padding-right: 6px; }
.figures td.end { text-align: right; padding: 0; }
.f1 { width: 375px; } .f2 { width: 113px; } .f3 { width: 19px; } .f4 { width: 105px; } .f5 { width: 15px; }
td.mark.mark { border: 0; padding: 0; font-size: 13px; font-weight: 400; color: #555; vertical-align: top; }
.blank { font-weight: 700; height: 17px; }
.blank.short { height: 16px; }
.bullets { list-style: none; line-height: 20px; }
.bullets li { position: relative; display: flex; padding-left: 23px; }
.dot { flex: none; width: 11px; font: 9px/20px "DejaVu Sans", sans-serif; }
.arr { flex: none; width: 14px; font: 12px/20px "DejaVu Sans", sans-serif; }
.txt { flex: none; width: 580px; }
.ibeam { position: absolute; left: 477px; top: 2px; }
h2 { font-size: 15px; font-weight: 700; line-height: 17px; }
.tasks { width: 656px; }
.tasks th, .tasks td { border: 1px solid #333; padding: 0; vertical-align: top; line-height: 17px; }
.tasks th { font-weight: 700; }
.tasks td { padding: 0 2px 0 7px; }
.c1 { width: 35px; } .c2 { width: 607px; } .c3 { width: 14px; }
td.mark.mark { padding-left: 2px; }
.subitem { display: flex; padding-left: 23px; }
.subitem .dot, .subitem .arr { line-height: 17px; }
.foot { margin-top: 25px; text-align: center; font-size: 13px; font-weight: 700; color: #8a8a8a; }
.foot b { color: #6e6e6e; }
.footmark { color: #8a8a8a; font-size: 13px; }

.vbar { width: 13px; flex: none; display: flex; flex-direction: column; box-sizing: border-box; background: #dadada; padding: 2px 1px 0 0; }
.vbar button { height: 12px; background: #fff; border: 1px solid #c4c4c4; }
.track { flex: 1; }
.thumb { height: 25px; margin-top: 87px; background: #fff; border: 1px solid #c4c4c4; }

.status { flex: none; height: 19px; display: flex; align-items: center; padding-left: 6px; background: #f2f2ef; font-size: 9px; color: #555; }
.words { margin: 0 14px 0 16px; }
.focus { margin-right: 9px; }
.view { width: 33px; height: 19px; }
.view.cur { background: #c8c8c6; }
.pm { width: 16px; font-size: 14px; }
.status input { appearance: none; width: 84px; height: 12px; margin: 0; background: linear-gradient(#999, #999) center / 100% 1px no-repeat; }
.status input::-webkit-slider-thumb { appearance: none; width: 4px; height: 10px; background: #666; }
.pct { width: 32px; text-align: center; margin-left: 1px; }

.taskbar { flex: none; height: 33px; display: flex; background: #1c1c1c; color: #f2f2f2; }
.start { width: 40px; }
.tsearch { width: 286px; box-sizing: border-box; display: flex; align-items: center; gap: 8px; padding-left: 9px; background: #f2f2f2; border-bottom: 1px solid #bbb; }
.tsearch input { flex: 1; min-width: 0; border: 0; padding: 0; background: none; font: 12px/16px "Open Sans", sans-serif; color: #333; }
.tsearch input::placeholder { color: #333; opacity: 1; }
.tasklist { display: flex; padding-left: 1px; }
.task { width: 41px; box-sizing: border-box; }
.task.word { background: #464646; border-bottom: 2px solid #8cc4f0; }
.task.obs { border-bottom: 2px solid #8cc4f0; }
.tray { display: flex; align-items: center; gap: 6px; margin-right: 4px; }
.clock { width: 52px; display: flex; flex-direction: column; justify-content: center; text-align: center; font-size: 10px; line-height: 15px; }
.note { width: 16px; margin: 0 19px 0 11px; }
</style>
